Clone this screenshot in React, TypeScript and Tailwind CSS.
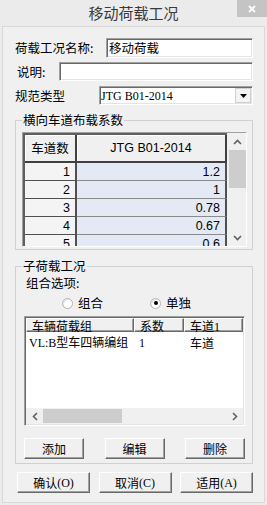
import React from "react";

const sunken =
  "border border-[#a0a0a0] border-b-white border-r-white shadow-[inset_1px_1px_0_#696969,inset_-1px_-1px_0_#e3e3e3]";
const raised =
  "border border-white border-b-[#696969] border-r-[#696969] shadow-[inset_-1px_-1px_0_#a0a0a0] bg-[#f0f0f0]";
const serif = "font-['Liberation_Serif',serif]";
const arial = "font-['Liberation_Sans',Arial,sans-serif]";

const rows = [
  { n: "1", k: "1.2" },
  { n: "2", k: "1" },
  { n: "3", k: "0.78" },
  { n: "4", k: "0.67" },
  { n: "5", k: "0.6" },
];

const chevrons = {
  up: { w: 9, h: 6, d: "M1 5 L4.5 1.5 L8 5" },
  down: { w: 9, h: 6, d: "M1 1 L4.5 4.5 L8 1" },
  left: { w: 6, h: 9, d: "M5 1 L1.5 4.5 L5 8" },
  right: { w: 6, h: 9, d: "M1 1 L4.5 4.5 L1 8" },
};

function Chevron({ dir }: { dir: keyof typeof chevrons }) {
  const c = chevrons[dir];
  return (
    <svg width={c.w} height={c.h} viewBox={`0 0 ${c.w} ${c.h}`}>
      <path d={c.d} fill="none" stroke="#606060" strokeWidth="1.6" />
    </svg>
  );
}

function Radio({ checked, label }: { checked?: boolean; label: string }) {
  return (
    <div className="flex items-center gap-[5px]">
      <span className="flex h-[11px] w-[11px] items-center justify-center rounded-full border border-[#b4b4b4] bg-white shadow-[inset_1px_1px_0_#e6e6e6]">
        {checked && <span className="h-[4px] w-[4px] rounded-full bg-black" />}
      </span>
      <span>{label}</span>
    </div>
  );
}

function Btn({ w, children }: { w: string; children: React.ReactNode }) {
  return (
    <div className={`${w} flex h-[21px] items-center justify-center text-[12px] ${raised}`}>
      {children}
    </div>
  );
}

export default function App() {
  return (
    <div className="h-[505px] w-[267px] overflow-hidden bg-[#ebebeb] font-['Noto_Sans_CJK_SC',sans-serif] text-[12.5px] leading-[14px] text-black">
      {/* title bar */}
      <div className="relative flex h-[26px] items-center justify-center text-[15px] text-[#3a3a3a]">
        移动荷载工况
        <div className="absolute right-0 top-0 flex h-[17px] w-[30px] items-center justify-center bg-[#c4c4c4]">
          <svg width="8" height="8" viewBox="0 0 8 8">
            <path d="M1 1 L7 7 M7 1 L1 7" stroke="#fff" strokeWidth="1.8" />
          </svg>
        </div>
      </div>

      <div className="mx-[2px] h-[477px] border border-[#d9d9d9] bg-[#f0f0f0] pl-[12px] pr-[11px]">
        {/* name */}
        <div className="mt-[11px] flex h-[20px] items-center">
          <span className="w-[91px]">荷载工况名称:</span>
          <div className={`flex h-full flex-1 items-center bg-white px-[2px] ${sunken}`}>移动荷载</div>
        </div>
        {/* description */}
        <div className="mt-[4px] flex h-[19px] items-center">
          <span className="ml-[2px] w-[42px]">说明:</span>
          <div className={`h-full flex-1 bg-white ${sunken}`} />
        </div>
        {/* code type */}
        <div className="mt-[5px] flex h-[19px] items-center">
          <span className="w-[84px]">规范类型</span>
          <div className={`flex h-full flex-1 items-center bg-white pl-[1px] ${sunken}`}>
            <span className={`${serif} flex-1 text-[12px]`}>JTG B01-2014</span>
            <div className="mr-[1px] flex h-[15px] w-[16px] items-center justify-center border border-[#d0d0d0] bg-[#f4f4f4]">
              <svg width="7" height="4" viewBox="0 0 7 4">
                <path d="M0 0 H7 L3.5 4 Z" fill="#000" />
              </svg>
            </div>
          </div>
        </div>

        {/* group 1 */}
        <fieldset className="mt-[8px] border border-[#d0d0d0] pb-[2px] pl-[6px] pr-[5px] pt-[5px]">
          <legend className="px-[1px]">横向车道布载系数</legend>
          <div className="flex h-[115px] border border-[#a0a0a0] border-b-white border-r-white">
            <div className="w-[204px] overflow-hidden border-l-2 border-t-2 border-[#5f5f5f]">
              <div className="flex h-[28px]">
                <div className="flex w-[52px] items-center justify-center border-b-2 border-r-2 border-[#404040] bg-[#f0f0f0] shadow-[inset_1px_1px_0_#fff]">
                  车道数
                </div>
                <div className={`${arial} flex w-[150px] items-center justify-center border-b-2 border-r-2 border-[#404040] bg-[#f0f0f0] shadow-[inset_1px_1px_0_#fff]`}>
                  JTG B01-2014
                </div>
              </div>
              {rows.map((r) => (
                <div key={r.n} className={`${arial} flex h-[18px]`}>
                  <div className="flex w-[52px] items-center justify-end border-b border-r-2 border-[#505050] bg-[#f4f4f4] pr-[5px]">
                    {r.n}
                  </div>
                  <div className="flex w-[150px] items-center justify-end border-b border-r-2 border-b-[#8a8a8a] border-r-[#505050] bg-[#e3eaf5] pr-[5px]">
                    {r.k}
                  </div>
                </div>
              ))}
            </div>
            <div className="flex flex-1 flex-col bg-[#f0f0f0] pl-[2px]">
              <div className="flex h-[17px] items-center justify-center">
                <Chevron dir="up" />
              </div>
              <div className="h-[38px] bg-[#cdcdcd]" />
              <div className="flex-1" />
              <div className="flex h-[17px] items-center justify-center">
                <Chevron dir="down" />
              </div>
            </div>
          </div>
        </fieldset>

        {/* group 2 */}
        <fieldset className="mt-[9px] border border-[#d0d0d0] pb-[4px] pl-[6px] pr-[5px]">
          <legend className="px-[1px]">子荷载工况</legend>
          <div className="ml-[4px] mt-[3px]">组合选项:</div>
          <div className="mt-[6px] flex h-[14px] items-center">
            <div className="ml-[40px]">
              <Radio label="组合" />
            </div>
            <div className="ml-[47px]">
              <Radio checked label="单独" />
            </div>
          </div>

          <div className={`mx-[2px] mt-[6px] flex h-[110px] flex-col bg-white p-[1px] ${sunken}`}>
            <div className="flex h-[14px] text-[12px] leading-[13px]">
              <div className={`w-[108px] shrink-0 pl-[5px] ${raised}`}>车辆荷载组</div>
              <div className={`w-[50px] shrink-0 pl-[5px] ${raised}`}>系数</div>
              <div className={`flex-1 pl-[5px] ${raised}`}>
                车道<span className={serif}>1</span>
              </div>
            </div>
            <div className="mt-[3px] flex h-[15px] items-center text-[12px]">
              <div className="w-[108px] shrink-0 pl-[3px]">
                <span className={serif}>VL:B</span>型车四辆编组
              </div>
              <div className={`w-[50px] shrink-0 pl-[5px] ${serif}`}>1</div>
              <div className="flex-1 pl-[6px]">车道</div>
            </div>
            <div className="flex-1" />
            <div className="flex h-[16px] items-stretch bg-[#f0f0f0]">
              <div className="flex w-[17px] items-center justify-center">
                <Chevron dir="left" />
              </div>
              <div className="my-[1px] w-[79px] bg-[#cdcdcd]" />
              <div className="flex-1" />
              <div className="flex w-[17px] items-center justify-center">
                <Chevron dir="right" />
              </div>
            </div>
          </div>

          <div className="mt-[12px] flex justify-between px-[2px]">
            <Btn w="w-[60px]">添加</Btn>
            <Btn w="w-[60px]">编辑</Btn>
            <Btn w="w-[60px]">删除</Btn>
          </div>
        </fieldset>

        <div className="mt-[8px] flex justify-between pl-[2px]">
          <Btn w="w-[73px]">
            确认<span className={serif}>(O)</span>
          </Btn>
          <Btn w="w-[73px]">
            取消<span className={serif}>(C)</span>
          </Btn>
          <Btn w="w-[73px]">
            适用<span className={serif}>(A)</span>
          </Btn>
        </div>
      </div>
    </div>
  );
}
